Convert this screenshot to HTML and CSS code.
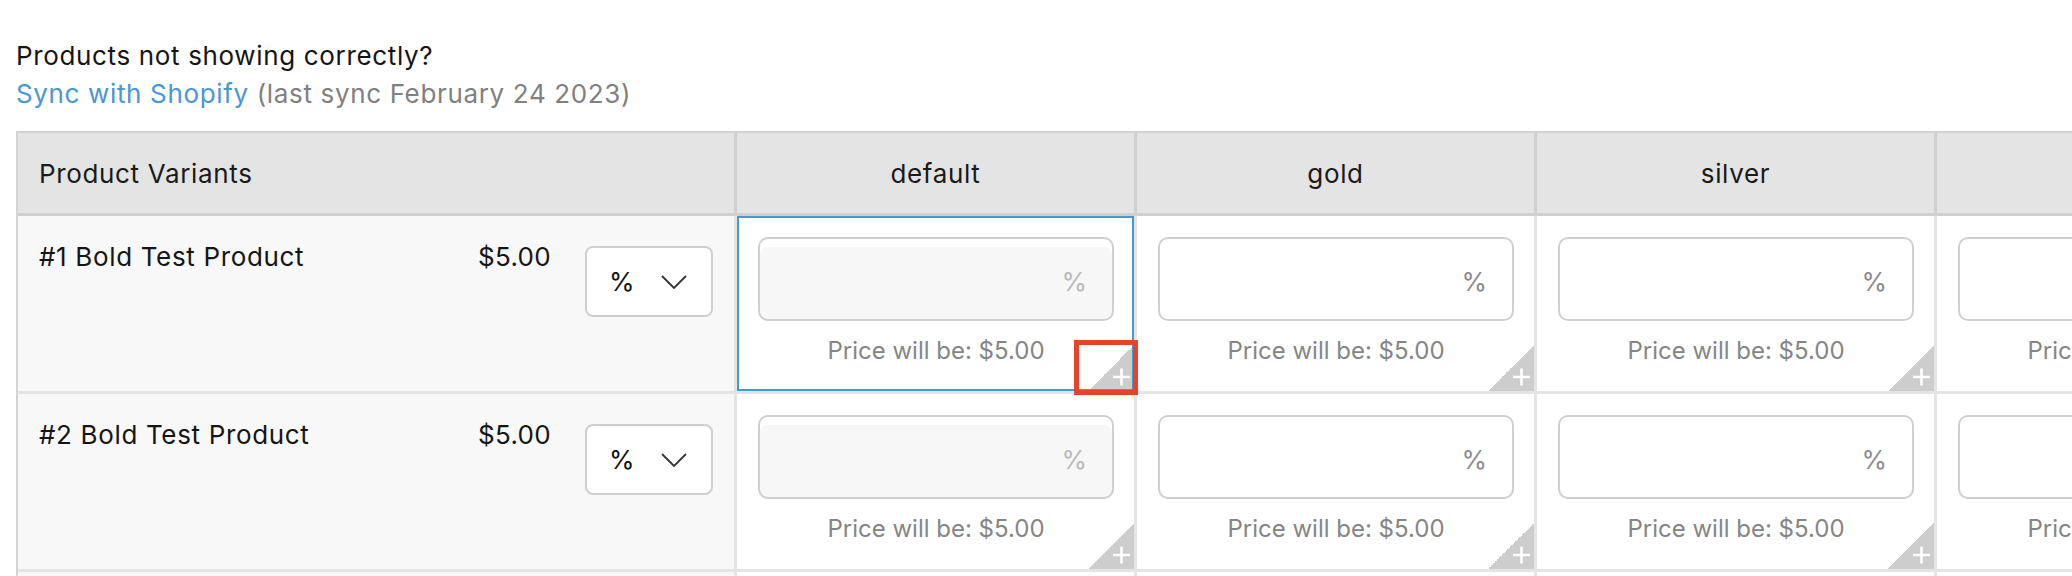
FILE: index.html
```html
<!DOCTYPE html>
<html lang="en">
<head>
<meta charset="utf-8">
<title>Product Variants Pricing</title>
<link rel="stylesheet" href="styles.css">
</head>
<body>
<div class="page">
  <p class="notice">Products not showing correctly?</p>
  <p class="sync"><a class="sync__link" href="#">Sync with Shopify</a> <span class="sync__meta">(last sync February 24 2023)</span></p>

  <div class="grid">
    <div class="head head--variants">Product Variants</div>
    <div class="head">default</div>
    <div class="head">gold</div>
    <div class="head">silver</div>
    <div class="head"></div>

    <!-- row 1 -->
    <div class="variant">
      <span class="variant__name">#1 Bold Test Product</span>
      <span class="variant__price">$5.00</span>
      <div class="select"><span>%</span><svg class="select__chev" width="26" height="14" viewBox="0 0 26 14"><polyline points="1,1 13,13 25,1" fill="none" stroke="#333" stroke-width="1.8"/></svg></div>
    </div>
    <div class="cell cell--focus">
      <div class="field field--disabled"><span class="field__unit">%</span></div>
      <p class="result">Price will be: $5.00</p>
      <span class="corner"><svg width="46" height="46" viewBox="0 0 46 46"><path d="M33.5 23.5v17M25 32h17" stroke="#fff" stroke-width="2.6"/></svg></span>
      <span class="ring"></span>
      <span class="mark"></span>
    </div>
    <div class="cell">
      <div class="field"><span class="field__unit">%</span></div>
      <p class="result">Price will be: $5.00</p>
      <span class="corner"><svg width="46" height="46" viewBox="0 0 46 46"><path d="M33.5 23.5v17M25 32h17" stroke="#fff" stroke-width="2.6"/></svg></span>
    </div>
    <div class="cell">
      <div class="field"><span class="field__unit">%</span></div>
      <p class="result">Price will be: $5.00</p>
      <span class="corner"><svg width="46" height="46" viewBox="0 0 46 46"><path d="M33.5 23.5v17M25 32h17" stroke="#fff" stroke-width="2.6"/></svg></span>
    </div>
    <div class="cell">
      <div class="field"><span class="field__unit">%</span></div>
      <p class="result">Price will be: $5.00</p>
      <span class="corner"><svg width="46" height="46" viewBox="0 0 46 46"><path d="M33.5 23.5v17M25 32h17" stroke="#fff" stroke-width="2.6"/></svg></span>
    </div>

    <!-- row 2 -->
    <div class="variant">
      <span class="variant__name">#2 Bold Test Product</span>
      <span class="variant__price">$5.00</span>
      <div class="select"><span>%</span><svg class="select__chev" width="26" height="14" viewBox="0 0 26 14"><polyline points="1,1 13,13 25,1" fill="none" stroke="#333" stroke-width="1.8"/></svg></div>
    </div>
    <div class="cell">
      <div class="field field--disabled"><span class="field__unit">%</span></div>
      <p class="result">Price will be: $5.00</p>
      <span class="corner"><svg width="46" height="46" viewBox="0 0 46 46"><path d="M33.5 23.5v17M25 32h17" stroke="#fff" stroke-width="2.6"/></svg></span>
    </div>
    <div class="cell">
      <div class="field"><span class="field__unit">%</span></div>
      <p class="result">Price will be: $5.00</p>
      <span class="corner"><svg width="46" height="46" viewBox="0 0 46 46"><path d="M33.5 23.5v17M25 32h17" stroke="#fff" stroke-width="2.6"/></svg></span>
    </div>
    <div class="cell">
      <div class="field"><span class="field__unit">%</span></div>
      <p class="result">Price will be: $5.00</p>
      <span class="corner"><svg width="46" height="46" viewBox="0 0 46 46"><path d="M33.5 23.5v17M25 32h17" stroke="#fff" stroke-width="2.6"/></svg></span>
    </div>
    <div class="cell">
      <div class="field"><span class="field__unit">%</span></div>
      <p class="result">Price will be: $5.00</p>
      <span class="corner"><svg width="46" height="46" viewBox="0 0 46 46"><path d="M33.5 23.5v17M25 32h17" stroke="#fff" stroke-width="2.6"/></svg></span>
    </div>

    <!-- row 3 (cut off by the viewport) -->
    <div class="variant"></div>
    <div class="cell"></div>
    <div class="cell"></div>
    <div class="cell"></div>
    <div class="cell"></div>
  </div>
</div>
</body>
</html>
```

FILE: styles.css
```css
* {
  box-sizing: border-box;
}

html,
body {
  margin: 0;
  padding: 0;
  overflow: hidden;
  background: #fff;
}

body {
  font-family: "Inter", "Noto Sans", sans-serif;
  font-size: 26px;
  letter-spacing: 0.65px;
  color: #151515;
}

.page {
  padding: 37px 0 0 16px;
}

.notice,
.sync {
  margin: 0;
  line-height: 38px;
}

.sync__link {
  color: #4b96d5;
  text-decoration: none;
}

.sync__meta {
  color: #808080;
}

.grid {
  margin-top: 18px;
  display: grid;
  grid-template-columns: 719px repeat(4, 400px);
  width: 2321px;
  border-top: 2px solid #d2d2d2;
  border-left: 2px solid #d4d4d4;
}

.head {
  height: 83px;
  background: #e4e4e4;
  border-right: 3px solid #d0d0d0;
  border-bottom: 3px solid #d0d0d0;
  display: flex;
  align-items: center;
  justify-content: center;
  color: #1a1a1a;
}

.head--variants {
  justify-content: flex-start;
  padding-left: 21px;
}

.variant {
  height: 178px;
  background: #f8f8f8;
  border-right: 3px solid #e4e4e4;
  border-bottom: 3px solid #e4e4e4;
  display: flex;
  align-items: flex-start;
  padding: 22px 21px 0 21px;
  line-height: 38px;
}

.variant__name {
  flex: 1;
}

.variant__price {
  margin-right: 34px;
  letter-spacing: 0.3px;
}

.select {
  margin-top: 8px;
  width: 128px;
  height: 71px;
  background: #fff;
  border: 2px solid #cfcfcf;
  border-radius: 8px;
  display: flex;
  align-items: center;
  justify-content: space-between;
  padding: 0 24px 0 22px;
  color: #111;
}

.select__chev {
  display: block;
}

.cell {
  position: relative;
  height: 178px;
  background: #fff;
  border-right: 3px solid #e4e4e4;
  border-bottom: 3px solid #e4e4e4;
  padding: 21px 20px 0 21px;
}

.field {
  height: 84px;
  border: 2px solid #cfcfcf;
  border-radius: 10px;
  background: #fff;
  display: flex;
  align-items: center;
  justify-content: flex-end;
  padding: 4px 25px 0 0;
}

.field--disabled {
  background: #f7f7f7;
  box-shadow: inset 0 8px 0 #fff;
}

.field__unit {
  color: #8c8c8c;
  letter-spacing: 0;
}

.field--disabled .field__unit {
  color: #b9b9b9;
}

.result {
  margin: 15px 0 0;
  font-size: 24px;
  letter-spacing: 0;
  line-height: 30px;
  text-align: center;
  color: #858585;
}

.corner {
  position: absolute;
  right: 0;
  bottom: 0;
  width: 46px;
  height: 46px;
  background: linear-gradient(to bottom right, transparent 50%, #cdcdcd 50%);
}

.corner svg {
  display: block;
}

.ring {
  position: absolute;
  inset: 0;
  border: 2.5px solid #4699d1;
  z-index: 1;
}

.mark {
  position: absolute;
  left: 337px;
  top: 124px;
  width: 64px;
  height: 55px;
  border: 5px solid #e5432b;
  z-index: 2;
}
```
